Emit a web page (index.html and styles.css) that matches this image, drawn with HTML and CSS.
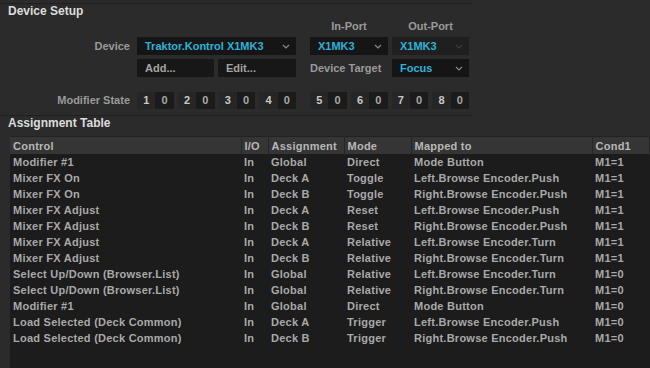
FILE: index.html
```html
<!DOCTYPE html>
<html>
<head>
<title>Controller Manager</title>
<link rel="stylesheet" href="styles.css">
</head>
<body>
<div class="setup">
  <div class="section-title">Device Setup</div>
  <div class="setup-grid">
    <div class="col-head port-in">In-Port</div>
    <div class="col-head port-out">Out-Port</div>

    <div class="label row-device">Device</div>
    <div class="select wide row-device">
      <span>Traktor.Kontrol X1MK3</span>
      <svg class="chev" width="8" height="5" viewBox="0 0 8 5"><polyline points="1,1 4,4 7,1" fill="none" stroke="#8a8a8a" stroke-width="1.2"/></svg>
    </div>
    <div class="select port-in row-device">
      <span>X1MK3</span>
      <svg class="chev" width="8" height="5" viewBox="0 0 8 5"><polyline points="1,1 4,4 7,1" fill="none" stroke="#8a8a8a" stroke-width="1.2"/></svg>
    </div>
    <div class="select disabled port-out row-device">
      <span>X1MK3</span>
      <svg class="chev" width="8" height="5" viewBox="0 0 8 5"><polyline points="1,1 4,4 7,1" fill="none" stroke="#3c3c3c" stroke-width="1.2"/></svg>
    </div>

    <div class="btn col-add row-actions">Add...</div>
    <div class="btn col-edit row-actions">Edit...</div>
    <div class="label-inline port-in row-actions">Device Target</div>
    <div class="select port-out row-actions">
      <span>Focus</span>
      <svg class="chev" width="8" height="5" viewBox="0 0 8 5"><polyline points="1,1 4,4 7,1" fill="none" stroke="#8a8a8a" stroke-width="1.2"/></svg>
    </div>

    <div class="label row-mods">Modifier State</div>
    <div class="mods left row-mods">
      <div class="mod"><span class="m-num">1</span><span class="m-val">0</span></div>
      <div class="mod"><span class="m-num">2</span><span class="m-val">0</span></div>
      <div class="mod"><span class="m-num">3</span><span class="m-val">0</span></div>
      <div class="mod"><span class="m-num">4</span><span class="m-val">0</span></div>
    </div>
    <div class="mods right row-mods">
      <div class="mod"><span class="m-num">5</span><span class="m-val">0</span></div>
      <div class="mod"><span class="m-num">6</span><span class="m-val">0</span></div>
      <div class="mod"><span class="m-num">7</span><span class="m-val">0</span></div>
      <div class="mod"><span class="m-num">8</span><span class="m-val">0</span></div>
    </div>
  </div>
</div>

<div class="section-title">Assignment Table</div>
<table class="assign">
  <colgroup>
    <col style="width:231px"><col style="width:27px"><col style="width:76px">
    <col style="width:67px"><col style="width:181px"><col>
  </colgroup>
  <thead>
    <tr><th>Control</th><th>I/O</th><th>Assignment</th><th>Mode</th><th>Mapped to</th><th>Cond1</th></tr>
  </thead>
  <tbody>
    <tr><td>Modifier #1</td><td>In</td><td>Global</td><td>Direct</td><td>Mode Button</td><td>M1=1</td></tr>
    <tr><td>Mixer FX On</td><td>In</td><td>Deck A</td><td>Toggle</td><td>Left.Browse Encoder.Push</td><td>M1=1</td></tr>
    <tr><td>Mixer FX On</td><td>In</td><td>Deck B</td><td>Toggle</td><td>Right.Browse Encoder.Push</td><td>M1=1</td></tr>
    <tr><td>Mixer FX Adjust</td><td>In</td><td>Deck A</td><td>Reset</td><td>Left.Browse Encoder.Push</td><td>M1=1</td></tr>
    <tr><td>Mixer FX Adjust</td><td>In</td><td>Deck B</td><td>Reset</td><td>Right.Browse Encoder.Push</td><td>M1=1</td></tr>
    <tr><td>Mixer FX Adjust</td><td>In</td><td>Deck A</td><td>Relative</td><td>Left.Browse Encoder.Turn</td><td>M1=1</td></tr>
    <tr><td>Mixer FX Adjust</td><td>In</td><td>Deck B</td><td>Relative</td><td>Right.Browse Encoder.Turn</td><td>M1=1</td></tr>
    <tr><td>Select Up/Down (Browser.List)</td><td>In</td><td>Global</td><td>Relative</td><td>Left.Browse Encoder.Turn</td><td>M1=0</td></tr>
    <tr><td>Select Up/Down (Browser.List)</td><td>In</td><td>Global</td><td>Relative</td><td>Right.Browse Encoder.Turn</td><td>M1=0</td></tr>
    <tr><td>Modifier #1</td><td>In</td><td>Global</td><td>Direct</td><td>Mode Button</td><td>M1=0</td></tr>
    <tr><td>Load Selected (Deck Common)</td><td>In</td><td>Deck A</td><td>Trigger</td><td>Left.Browse Encoder.Push</td><td>M1=0</td></tr>
    <tr><td>Load Selected (Deck Common)</td><td>In</td><td>Deck B</td><td>Trigger</td><td>Right.Browse Encoder.Push</td><td>M1=0</td></tr>
  </tbody>
</table>
<div class="table-fill"></div>
</body>
</html>
```

FILE: styles.css
```css
html, body {
  height: 100%;
}
body {
  margin: 0;
  background-color: #2b2b2b;
  font-family: "Liberation Sans", Arial, sans-serif;
  font-size: 11px;
  font-weight: bold;
  color: #b4b4b4;
  overflow: hidden;
  display: flex;
  flex-direction: column;
}
.setup {
  width: 473px;
  margin-top: 3px;
  border-top: 1px solid #1f1f1f;
  border-bottom: 1px solid #1f1f1f;
  padding-bottom: 6px;
  flex-shrink: 0;
}
.section-title {
  font-size: 12px;
  color: #dcdcdc;
  padding-left: 8px;
  height: 15px;
  line-height: 15px;
  flex-shrink: 0;
}
.setup-grid {
  display: grid;
  grid-template-columns: 133px 77px 78px 6px 78px 77px;
  grid-template-rows: 14px 18px 18px 7px 17px;
  column-gap: 4px;
  row-gap: 4px;
}
.row-device { grid-row: 2; }
.row-actions { grid-row: 3; }
.row-mods { grid-row: 5; }
.col-head {
  grid-row: 1;
  text-align: center;
  color: #9a9a9a;
  line-height: 14px;
}
.port-in { grid-column: 5; }
.port-out { grid-column: 6; }
.col-add { grid-column: 2; }
.col-edit { grid-column: 3; }
.label {
  grid-column: 1;
  text-align: right;
  padding-right: 3px;
  color: #9a9a9a;
  line-height: 18px;
}
.row-mods.label {
  line-height: 17px;
}
.label-inline {
  color: #9a9a9a;
  line-height: 18px;
  white-space: nowrap;
}
.select {
  background: #151515;
  display: flex;
  align-items: center;
  justify-content: space-between;
  padding: 0 6px 0 8px;
  color: #2fb1da;
}
.select.wide {
  grid-column: 2 / 4;
}
.select.disabled {
  background: #1f1f1f;
}
.chev {
  flex-shrink: 0;
}
.btn {
  background: #171717;
  color: #a4a4a4;
  line-height: 18px;
  padding-left: 8px;
}
.mods {
  display: flex;
  gap: 4px;
}
.mods.left { grid-column: 2 / 4; }
.mods.right { grid-column: 5 / 7; }
.mod {
  flex: 1;
  display: flex;
  height: 17px;
}
.mod span {
  flex: 1;
  text-align: center;
  line-height: 17px;
}
.m-num {
  background: #262626;
  color: #c8c8c8;
}
.m-val {
  background: #1b1b1b;
  color: #a8a8a8;
}
.assign {
  margin-left: 10px;
  margin-top: 5px;
  width: calc(100% - 10px);
  table-layout: fixed;
  border-collapse: collapse;
  background: #1c1c1c;
  flex-shrink: 0;
  letter-spacing: 0.25px;
}
.assign th {
  background: #353535;
  color: #b8b8b8;
  font-weight: bold;
  text-align: left;
  height: 17px;
  padding: 0 3px;
  border-right: 1px solid #262626;
  border-top: 1px solid #222;
  white-space: nowrap;
  overflow: hidden;
}
.assign td {
  height: 16px;
  padding: 0 3px;
  white-space: nowrap;
  overflow: hidden;
  color: #a9a9a9;
}
.table-fill {
  flex: 1;
  margin-left: 10px;
  background: #1c1c1c;
}
```
